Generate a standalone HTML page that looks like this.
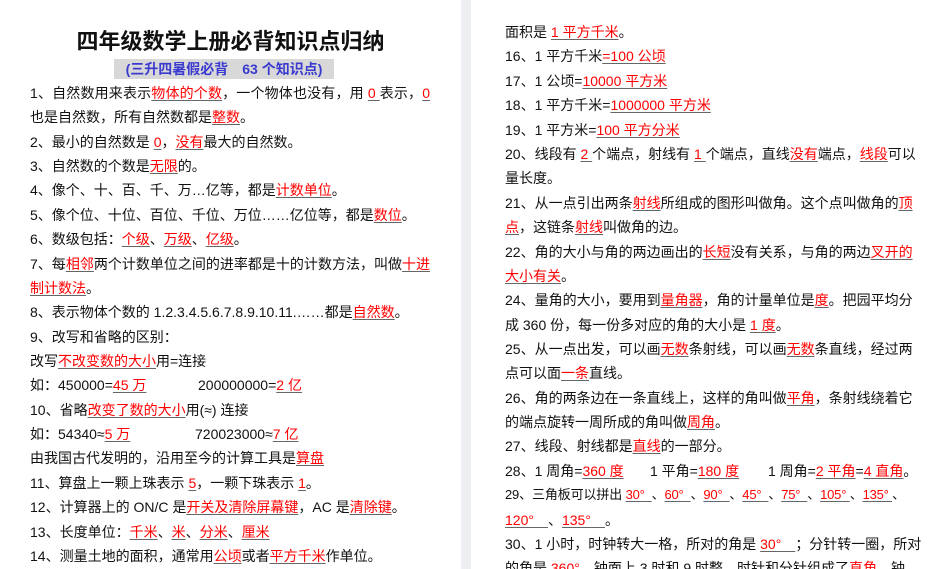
<!DOCTYPE html>
<html><head><meta charset="utf-8"><style>
html,body{margin:0;padding:0;width:931px;height:569px;overflow:hidden;background:#fff;}
body{position:relative;font-family:"Liberation Sans","Noto Sans CJK SC",sans-serif;font-size:14px;color:#111;}
.gap{position:absolute;left:461px;top:0;width:10px;height:569px;background:#eeeff2;}
.l{position:absolute;height:24px;line-height:24px;white-space:nowrap;}
.L{left:30px;}
.R{left:505px;}
.j{width:400px;text-align:justify;text-align-last:justify;}
.r{color:#f00;text-decoration:underline;text-decoration-color:#666;text-underline-offset:2px;}
.t{position:absolute;left:0;width:461px;top:24px;text-align:center;font-size:22px;font-weight:bold;font-family:"Noto Sans CJK SC",sans-serif;color:#111;}
.s{position:absolute;left:114px;top:59px;width:220px;height:20px;line-height:20px;background:#d8d8d8;color:#3a3ad0;font-weight:bold;font-size:14px;text-align:center;}
</style></head><body>
<div class="gap"></div>
<div class="t">四年级数学上册必背知识点归纳</div>
<div class="s">(三升四暑假必背　63 个知识点)</div>

<div class="l L j" style="top:81px">1、自然数用来表示<span class="r">物体的个数</span>，一个物体也没有，用 <span class="r">0 </span>表示，<span class="r">0</span></div>
<div class="l L" style="top:105px">也是自然数，所有自然数都是<span class="r">整数</span>。</div>
<div class="l L" style="top:130px">2、最小的自然数是 <span class="r">0</span>，<span class="r">没有</span>最大的自然数。</div>
<div class="l L" style="top:154px">3、自然数的个数是<span class="r">无限</span>的。</div>
<div class="l L" style="top:178px">4、像个、十、百、千、万…亿等，都是<span class="r">计数单位</span>。</div>
<div class="l L" style="top:203px">5、像个位、十位、百位、千位、万位……亿位等，都是<span class="r">数位</span>。</div>
<div class="l L" style="top:227px">6、数级包括：<span class="r">个级</span>、<span class="r">万级</span>、<span class="r">亿级</span>。</div>
<div class="l L j" style="top:252px">7、每<span class="r">相邻</span>两个计数单位之间的进率都是十的计数方法，叫做<span class="r">十进</span></div>
<div class="l L" style="top:276px"><span class="r">制计数法</span>。</div>
<div class="l L" style="top:300px">8、表示物体个数的 1.2.3.4.5.6.7.8.9.10.11.……都是<span class="r">自然数</span>。</div>
<div class="l L" style="top:325px">9、改写和省略的区别：</div>
<div class="l L" style="top:349px">改写<span class="r">不改变数的大小</span>用=连接</div>
<div class="l L" style="top:373px">如：450000=<span class="r">45 万</span><span style="position:absolute;left:168px">200000000=<span class="r">2 亿</span></span></div>
<div class="l L" style="top:398px">10、省略<span class="r">改变了数的大小</span>用(≈) 连接</div>
<div class="l L" style="top:422px">如：54340≈<span class="r">5 万</span><span style="position:absolute;left:165px">720023000≈<span class="r">7 亿</span></span></div>
<div class="l L" style="top:446px">由我国古代发明的，沿用至今的计算工具是<span class="r">算盘</span></div>
<div class="l L" style="top:471px">11、算盘上一颗上珠表示 <span class="r">5</span>，一颗下珠表示 <span class="r">1</span>。</div>
<div class="l L" style="top:495px">12、计算器上的 ON/C 是<span class="r">开关及清除屏幕键</span>，AC 是<span class="r">清除键</span>。</div>
<div class="l L" style="top:520px">13、长度单位：<span class="r">千米</span>、<span class="r">米</span>、<span class="r">分米</span>、<span class="r">厘米</span></div>
<div class="l L" style="top:544px">14、测量土地的面积，通常用<span class="r">公顷</span>或者<span class="r">平方千米</span>作单位。</div>

<div class="l R" style="top:20px">面积是 <span class="r">1 平方千米</span>。</div>
<div class="l R" style="top:44px">16、1 平方千米<span class="r">=100 公顷</span></div>
<div class="l R" style="top:69px">17、1 公顷=<span class="r">10000 平方米</span></div>
<div class="l R" style="top:93px">18、1 平方千米=<span class="r">1000000 平方米</span></div>
<div class="l R" style="top:118px">19、1 平方米=<span class="r">100 平方分米</span></div>
<div class="l R j" style="top:142px">20、线段有 <span class="r">2 </span>个端点，射线有 <span class="r">1 </span>个端点，直线<span class="r">没有</span>端点，<span class="r">线段</span>可以</div>
<div class="l R" style="top:166px">量长度。</div>
<div class="l R j" style="top:191px">21、从一点引出两条<span class="r">射线</span>所组成的图形叫做角。这个点叫做角的<span class="r">顶</span></div>
<div class="l R" style="top:215px"><span class="r">点</span>，这链条<span class="r">射线</span>叫做角的边。</div>
<div class="l R j" style="top:240px">22、角的大小与角的两边画出的<span class="r">长短</span>没有关系，与角的两边<span class="r">叉开的</span></div>
<div class="l R" style="top:264px"><span class="r">大小有关</span>。</div>
<div class="l R j" style="top:288px">24、量角的大小，要用到<span class="r">量角器</span>，角的计量单位是<span class="r">度</span>。把园平均分</div>
<div class="l R" style="top:313px">成 360 份，每一份多对应的角的大小是 <span class="r">1 度</span>。</div>
<div class="l R j" style="top:337px">25、从一点出发，可以画<span class="r">无数</span>条射线，可以画<span class="r">无数</span>条直线，经过两</div>
<div class="l R" style="top:361px">点可以面<span class="r">一条</span>直线。</div>
<div class="l R j" style="top:386px">26、角的两条边在一条直线上，这样的角叫做<span class="r">平角</span>，条射线绕着它</div>
<div class="l R" style="top:410px">的端点旋转一周所成的角叫做<span class="r">周角</span>。</div>
<div class="l R" style="top:434px">27、线段、射线都是<span class="r">直线</span>的一部分。</div>
<div class="l R" style="top:459px">28、1 周角=<span class="r">360 度</span><span style="position:absolute;left:145px">1 平角=<span class="r">180 度</span></span><span style="position:absolute;left:263px">1 周角=<span class="r">2 平角</span>=<span class="r">4 直角</span>。</span></div>
<div class="l R j" style="top:483px;font-size:13px;letter-spacing:-0.2px">29、三角板可以拼出 <span class="r">30°&nbsp;&nbsp;</span>、<span class="r">60°&nbsp;&nbsp;</span>、<span class="r">90°&nbsp;&nbsp;</span>、<span class="r">45°&nbsp;&nbsp;</span>、<span class="r">75°&nbsp;&nbsp;</span>、<span class="r">105°&nbsp;</span>、<span class="r">135°&nbsp;</span>、</div>
<div class="l R" style="top:508px"><span class="r">120°　</span>、<span class="r">135°　</span>。</div>
<div class="l R j" style="top:532px">30、1 小时，时钟转大一格，所对的角是 <span class="r">30°　</span>；分针转一圈，所对</div>
<div class="l R" style="top:556px">的角是 <span class="r">360°</span>，钟面上 3 时和 9 时整，时针和分针组成了<span class="r">直角</span>，钟</div>
</body></html>
